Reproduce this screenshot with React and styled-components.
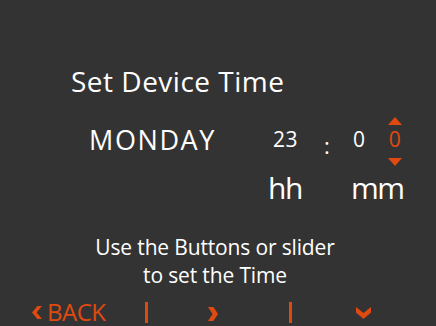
import React from 'react';
import styled, { createGlobalStyle } from 'styled-components';

const ORANGE = '#e04a10';

const GlobalStyle = createGlobalStyle`
  html, body {
    margin: 0;
    padding: 0;
    background: #333333;
  }
  body {
    font-family: 'Open Sans', 'Noto Sans', sans-serif;
    color: #ffffff;
  }
`;

const Screen = styled.div`
  width: 436px;
  height: 326px;
  background: #333333;
  display: flex;
  flex-direction: column;
`;

const Title = styled.div`
  margin: 64px 0 0 71px;
  height: 35px;
  font-size: 28px;
  line-height: 34px;
  letter-spacing: 0.5px;
`;

// day + hours : minutes with the spinner on the last digit
const TimeRow = styled.div`
  display: flex;
  align-items: flex-start;
  margin-top: 18px;
  height: 50px;
`;

const Day = styled.div`
  margin: 9px 0 0 89px;
  width: 184px;
  font-size: 27px;
  line-height: 27px;
  letter-spacing: 1.6px;
`;

const Digit = styled.div`
  width: ${(props) => props.$width};
  margin-top: ${(props) => props.$top || '0'};
  font-size: 21px;
  line-height: 21px;
  letter-spacing: 0.5px;
  color: ${(props) => (props.$active ? ORANGE : '#ffffff')};
  text-align: ${(props) => props.$align || 'left'};
`;

const Colon = styled.div`
  width: 29px;
  margin-top: 17px;
  font-size: 22px;
  line-height: 22px;
`;

const Spinner = styled.div`
  display: flex;
  flex-direction: column;
  align-items: center;
  width: 16px;
`;

const Triangle = styled.div`
  width: 0;
  height: 0;
  border-left: 7.5px solid transparent;
  border-right: 7.5px solid transparent;
  ${(props) =>
    props.$down
      ? `border-top: 8px solid ${ORANGE}; margin-top: 8px;`
      : `border-bottom: 8px solid ${ORANGE}; margin-bottom: 4px;`}
`;

const UnitRow = styled.div`
  display: flex;
  margin: 4px 0 0 268px;
  font-size: 30px;
  line-height: 34px;
  letter-spacing: -1.5px;
`;

const Unit = styled.div`
  width: ${(props) => props.$width || 'auto'};
`;

const Hint = styled.div`
  margin-top: 28px;
  padding-right: 6px;
  text-align: center;
  font-size: 21px;
  line-height: 28px;
  letter-spacing: -0.15px;
`;

const NavBar = styled.div`
  display: flex;
  align-items: flex-start;
  margin-top: 11px;
  height: 26px;
  color: ${ORANGE};
`;

const BackButton = styled.div`
  display: flex;
  align-items: flex-start;
  margin-left: 32px;
  width: 113px;
`;

const BackLabel = styled.span`
  margin-left: 5px;
  font-size: 24px;
  line-height: 24px;
  letter-spacing: -0.5px;
`;

const Icon = styled.svg`
  flex-shrink: 0;
  margin-left: ${(props) => props.$left || '0'};
  margin-top: ${(props) => props.$top || '0'};
`;

const Bar = styled.div`
  width: 3px;
  height: 21px;
  margin: 2px 0 0 ${(props) => props.$left || '0'};
  background: ${ORANGE};
`;

const chevrons = {
  left: { w: 10, h: 13, points: '10,0 4.6,6.5 10,13 5.4,13 0,6.5 5.4,0' },
  right: { w: 10, h: 14, points: '0,0 5.4,0 10,7 5.4,14 0,14 4.6,7' },
  down: { w: 15, h: 12, points: '0,0 7.5,6 15,0 15,5.5 7.5,12 0,5.5' },
};

const Chevron = ({ dir, left, top }) => {
  const c = chevrons[dir];
  return (
    <Icon width={c.w} height={c.h} viewBox={`0 0 ${c.w} ${c.h}`} $left={left} $top={top}>
      <polygon points={c.points} fill={ORANGE} />
    </Icon>
  );
};

export default function App() {
  return (
    <>
      <GlobalStyle />
      <Screen>
        <Title>Set Device Time</Title>
        <TimeRow>
          <Day>MONDAY</Day>
          <Digit $width="51px" $top="12px">23</Digit>
          <Colon>:</Colon>
          <Digit $width="34px" $top="12px">0</Digit>
          <Spinner>
            <Triangle />
            <Digit $active $width="16px" $align="center">0</Digit>
            <Triangle $down />
          </Spinner>
        </TimeRow>
        <UnitRow>
          <Unit $width="83px">hh</Unit>
          <Unit>mm</Unit>
        </UnitRow>
        <Hint>
          Use the Buttons or slider
          <br />
          to set the Time
        </Hint>
        <NavBar>
          <BackButton>
            <Chevron dir="left" top="6px" />
            <BackLabel>BACK</BackLabel>
          </BackButton>
          <Bar />
          <Chevron dir="right" left="60px" top="7px" />
          <Bar $left="71px" />
          <Chevron dir="down" left="64px" top="7px" />
        </NavBar>
      </Screen>
    </>
  );
}
